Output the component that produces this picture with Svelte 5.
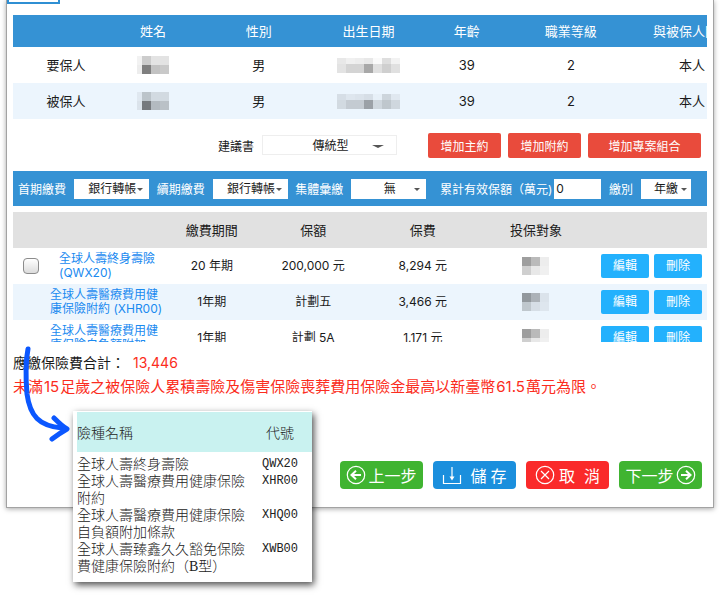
<script lang="ts">
	interface Person {
		role: string;
		gender: string;
		age: number;
		jobClass: number;
		relation: string;
	}

	interface Policy {
		name: string;
		code?: string;
		term: string;
		amount: string;
		premium: string;
		main?: boolean;
	}

	const people: Person[] = [
		{ role: '要保人', gender: '男', age: 39, jobClass: 2, relation: '本人' },
		{ role: '被保人', gender: '男', age: 39, jobClass: 2, relation: '本人' }
	];

	const policies: Policy[] = [
		{ name: '全球人壽終身壽險', code: '(QWX20)', term: '20 年期', amount: '200,000 元', premium: '8,294 元', main: true },
		{ name: '全球人壽醫療費用健康保險附約', code: '(XHR00)', term: '1年期', amount: '計劃五', premium: '3,466 元' },
		{ name: '全球人壽醫療費用健康保險自負額附加', term: '1年期', amount: '計劃 5A', premium: '1,171 元' }
	];

	const codes = [
		['全球人壽終身壽險', 'QWX20'],
		['全球人壽醫療費用健康保險附約', 'XHR00'],
		['全球人壽醫療費用健康保險自負額附加條款', 'XHQ00'],
		['全球人壽臻鑫久久豁免保險費健康保險附約（B型）', 'XWB00']
	];

	// opacity of each square in the masked fields, row by row
	const maskName = [0.05, 0.2, 0.11, 0.11, 0.07, 0.5, 0.24, 0.21];
	const maskDate = [0.09, 0.06, 0.07, 0.09, 0.02, 0.13, 0.05, 0.11, 0.17, 0.17, 0.34, 0.12, 0.19, 0.12];
	const maskTarget = [0.38, 0.27, 0.07, 0.19, 0.09, 0.06];
</script>

{#snippet mask(cells: number[], kind: string)}
	<span class="mask mask--{kind}">
		{#each cells as o}<i style="opacity:{o}"></i>{/each}
	</span>
{/snippet}

<main class="stage">
	<section class="panel">
		<div class="tab"></div>

		<div class="people-wrap">
			<table class="people">
				<colgroup>
					<col class="p-role" /><col class="p-name" /><col class="p-sex" /><col class="p-birth" />
					<col class="p-age" /><col class="p-job" /><col class="p-rel" />
				</colgroup>
				<thead>
					<tr>
						<th></th><th>姓名</th><th>性別</th><th>出生日期</th><th>年齡</th><th>職業等級</th><th>與被保人關係</th>
					</tr>
				</thead>
				<tbody>
					{#each people as p}
						<tr>
							<td>{p.role}</td>
							<td>{@render mask(maskName, 'name')}</td>
							<td>{p.gender}</td>
							<td>{@render mask(maskDate, 'date')}</td>
							<td>{p.age}</td>
							<td>{p.jobClass}</td>
							<td>{p.relation}</td>
						</tr>
					{/each}
				</tbody>
			</table>
		</div>

		<div class="tools">
			<label for="proposal">建議書</label>
			<span class="pick pick--wide">
				<select id="proposal"><option>傳統型</option></select>
			</span>
			<div class="adds">
				<button class="add">增加主約</button>
				<button class="add">增加附約</button>
				<button class="add add--wide">增加專案組合</button>
			</div>
		</div>

		<div class="bar">
			<label for="first">首期繳費</label>
			<span class="pick"><select id="first"><option>銀行轉帳</option></select></span>
			<label for="renew">續期繳費</label>
			<span class="pick"><select id="renew"><option>銀行轉帳</option></select></span>
			<label for="group">集體彙繳</label>
			<span class="pick"><select id="group"><option>無</option></select></span>
			<label for="total" class="total-label">累計有效保額（萬元)</label>
			<input id="total" type="text" value="0" />
			<label for="mode">繳別</label>
			<span class="pick pick--small"><select id="mode"><option>年繳</option></select></span>
		</div>

		<div class="list">
			<table class="policies">
				<colgroup>
					<col class="c-tick" /><col class="c-name" /><col class="c-term" /><col class="c-amount" />
					<col class="c-premium" /><col class="c-target" /><col class="c-ops" />
				</colgroup>
				<thead>
					<tr>
						<th></th><th></th><th>繳費期間</th><th>保額</th><th>保費</th><th>投保對象</th><th></th>
					</tr>
				</thead>
				<tbody>
					{#each policies as p}
						<tr>
							<td>{#if p.main}<input type="checkbox" aria-label={p.name} />{/if}</td>
							<td><a href="#policy">{p.name}{#if p.main}<br />{/if} {p.code ?? ''}</a></td>
							<td>{p.term}</td>
							<td>{p.amount}</td>
							<td>{p.premium}</td>
							<td>{@render mask(maskTarget, 'target')}</td>
							<td>
								<div class="ops"><button>編輯</button><button>刪除</button></div>
							</td>
						</tr>
					{/each}
				</tbody>
			</table>
		</div>

		<p class="sum">應繳保險費合計：<strong>13,446</strong></p>
		<p class="warn">未滿<span>15</span>足歲之被保險人累積壽險及傷害保險喪葬費用保險金最高以新臺幣<span>61.5</span>萬元為限。</p>

		<div class="actions">
			<button class="act act--green">
				<svg viewBox="0 0 20 20"><circle cx="10" cy="10" r="8.7" /><path class="bold" d="M15 10H5.5M10 5.8 5.5 10l4.5 4.2" /></svg>
				上一步
			</button>
			<button class="act act--blue">
				<svg viewBox="0 0 20 20"><path d="M1.5 10v8.5h17V10M10 2v12" /><path class="solid" d="M7.5 11.5h5L10 15.5z" /></svg>
				<span class="apart"><span>儲</span><span>存</span></span>
			</button>
			<button class="act act--red">
				<svg viewBox="0 0 20 20"><circle cx="10" cy="10" r="8.7" /><path d="m6 6 8 8M14 6l-8 8" /></svg>
				<span class="apart apart--more"><span>取</span><span>消</span></span>
			</button>
			<button class="act act--green">
				下一步
				<svg viewBox="0 0 20 20"><circle cx="10" cy="10" r="8.7" /><path class="bold" d="M5 10h9.5M10 5.8l4.5 4.2-4.5 4.2" /></svg>
			</button>
		</div>
	</section>

	<!-- Code lookup laid over the form, with the hand-drawn arrow leading to it -->
	<svg class="arrow" viewBox="0 0 50 100" fill="none">
		<path d="M6 7C3 22 4 40 5 52C8 74 17 84 40 86" />
		<path d="M32 76Q40 84 45 87Q38 91 30 97" />
	</svg>

	<aside class="codes">
		<table>
			<thead>
				<tr><th>險種名稱</th><th>代號</th></tr>
			</thead>
			<tbody>
				{#each codes as [name, code]}
					<tr><td>{name}</td><td>{code}</td></tr>
				{/each}
			</tbody>
		</table>
	</aside>
</main>

<style>
	:global(body) { background:#fff; }

	.stage {
		position:relative; padding:0 6px 94px; overflow:hidden;
		font-family:Inter, "Noto Sans CJK TC", sans-serif; font-size:12px; color:#1a1a1a;
	}
	.stage * { box-sizing:border-box; }
	button, input, select { font:inherit; color:inherit; border:0; margin:0; padding:0; }

	.panel {
		padding:0 6px 18px; background:#fff;
		border:1px solid #a3a3a3; border-top:0;
		box-shadow:0 1px 5px rgba(0,0,0,0.35);
	}
	.tab {
		width:53px; height:4px; margin:0 0 11px -6px;
		border:2px solid #2f8fd3; border-top:0; background:#fff;
	}

	table { border-collapse:collapse; table-layout:fixed; }
	th, td { padding:0; text-align:center; font-weight:400; }

	/* People */
	.people-wrap { overflow:hidden; }
	.people { width:109%; font-size:13px; }
	.people thead { background:#3592d4; color:#fff; }
	.people th { height:32px; padding-bottom:2px; white-space:nowrap; }
	.people td { height:36px; padding-bottom:1px; }
	tbody tr:nth-child(even) { background:#ecf5fd; }
	.p-role { width:14%; }
	.p-name { width:9%; }
	.p-sex { width:19%; }
	.p-birth { width:10%; }
	.p-age { width:16%; }
	.p-job { width:11.5%; }
	.p-rel { width:20.5%; }

	.mask { display:inline-grid; vertical-align:middle; }
	.mask i { background:#000; }
	.mask--name { grid-template:9px 9px / 5px 9px 9px 9px; }
	.mask--date { grid-template:6px 9px / repeat(7, 9px); }
	.mask--target { grid-template:9px 9px / 9px 9px 9px; }

	/* Proposal and add buttons */
	.tools { display:flex; align-items:center; justify-content:flex-end; height:52px; padding-right:6px; }
	.tools label { margin-right:8px; }
	.adds { display:flex; gap:7px; margin-left:31px; }
	.add { width:73px; height:25px; border-radius:2px; background:#e94b3c; color:#fff; }
	.add--wide { width:113px; }

	.pick { position:relative; display:inline-block; width:75px; height:20px; background:#fff; color:#1a1a1a; }
	.pick select {
		width:100%; height:100%; padding-left:2px; appearance:none; background:none;
		text-align:center; text-align-last:center;
	}
	.pick::after {
		content:""; position:absolute; right:6px; top:9px;
		border:3px solid transparent; border-top-color:#555; border-bottom:0;
	}
	.pick--wide { width:135px; border:1px solid #eee; }
	.pick--wide::after { right:12px; border-width:3px 6px 0; }
	.pick--small { width:50px; }
	.pick--small::after { right:4px; }
	.pick--small select { padding-left:0; }

	/* Payment bar */
	.bar {
		display:flex; align-items:center; justify-content:space-between; height:35px;
		padding:0 16px 0 5px; background:#3592d4; color:#fff; white-space:nowrap;
	}
	.bar input { width:47px; height:20px; padding:0 2px; background:#fff; color:#1a1a1a; }
	.total-label { margin:0 -6px 0 6px; }

	/* Policies */
	.list { height:130px; margin-top:6px; overflow:hidden; }
	.policies { width:100%; }
	.policies thead { background:#e1e1e1; font-size:13px; }
	.policies th { padding-bottom:2px; }
	.policies tr { height:36px; }
	.policies td { height:36px; line-height:14px; }
	.c-tick { width:5.2%; }
	.c-name { width:16.7%; }
	.c-term { width:13.5%; }
	.c-amount { width:15.7%; }
	.c-premium { width:15.9%; }
	.c-target { width:16.7%; }
	.c-ops { width:16.3%; }
	.policies a {
		display:block; width:fit-content; max-width:114px; margin:0 auto;
		color:#1a8af0; text-align:left; text-decoration:none;
	}
	.policies input {
		display:block; width:16px; height:16px; margin:0 auto; appearance:none;
		border:1px solid #8c8c8c; border-radius:4px; background:linear-gradient(#fff, #dcdcdc);
	}
	.ops { display:flex; justify-content:flex-end; gap:5px; padding-right:5px; }
	.ops button { width:48px; height:24px; border-radius:2px; background:#23b1fd; color:#fff; }

	.sum, .warn { margin:0; line-height:22px; }
	.sum { margin-top:10px; font-size:14px; }
	.sum strong { margin-left:8px; font-weight:400; color:#fb2c20; }
	.warn { margin-top:2px; font-size:15px; color:#fb2c20; }
	.warn span { margin:0 1px; }

	.actions { display:flex; justify-content:flex-end; gap:10px; margin-top:63px; padding-right:5px; }
	.act {
		display:flex; align-items:center; justify-content:center; gap:2px;
		width:83px; height:28px; border-radius:4px; color:#fff; font-size:16px; white-space:nowrap;
	}
	.act svg { width:20px; height:20px; fill:none; stroke:#fff; stroke-width:1.2; }
	.act .bold { stroke-width:2; }
	.act .solid { fill:#fff; stroke:none; }
	.act--green { background:#40b431; }
	.act--blue { background:#1b8fdd; }
	.act--red { background:#fa2a2a; }
	.apart { display:flex; gap:4px; margin-left:6px; }
	.apart--more { gap:9px; margin-left:2px; }

	/* Lookup */
	.arrow { position:absolute; left:22px; top:342px; width:50px; height:100px; }
	.arrow path { stroke:#0b57ff; stroke-width:5; stroke-linecap:round; stroke-linejoin:round; }
	.codes {
		position:absolute; left:73px; top:411px; width:239px; padding:1px 0 7px 4px;
		background:#fff; box-shadow:2px 3px 7px rgba(0,0,0,0.7);
		font-family:"Liberation Serif", "Noto Sans CJK TC", serif; font-size:14px; color:#222;
	}
	.codes table { width:100%; }
	.codes th, .codes td { font-weight:300; }
	.codes th { height:40px; background:#c9f2f0; }
	.codes th:first-child, .codes td:first-child { width:171px; text-align:left; }
	.codes td { line-height:17px; vertical-align:top; }
	.codes td:last-child { font-family:"Liberation Mono", monospace; font-size:12px; }
	.codes tbody tr { background:none; }
	.codes tbody tr:first-child td { padding-top:4px; }
</style>
